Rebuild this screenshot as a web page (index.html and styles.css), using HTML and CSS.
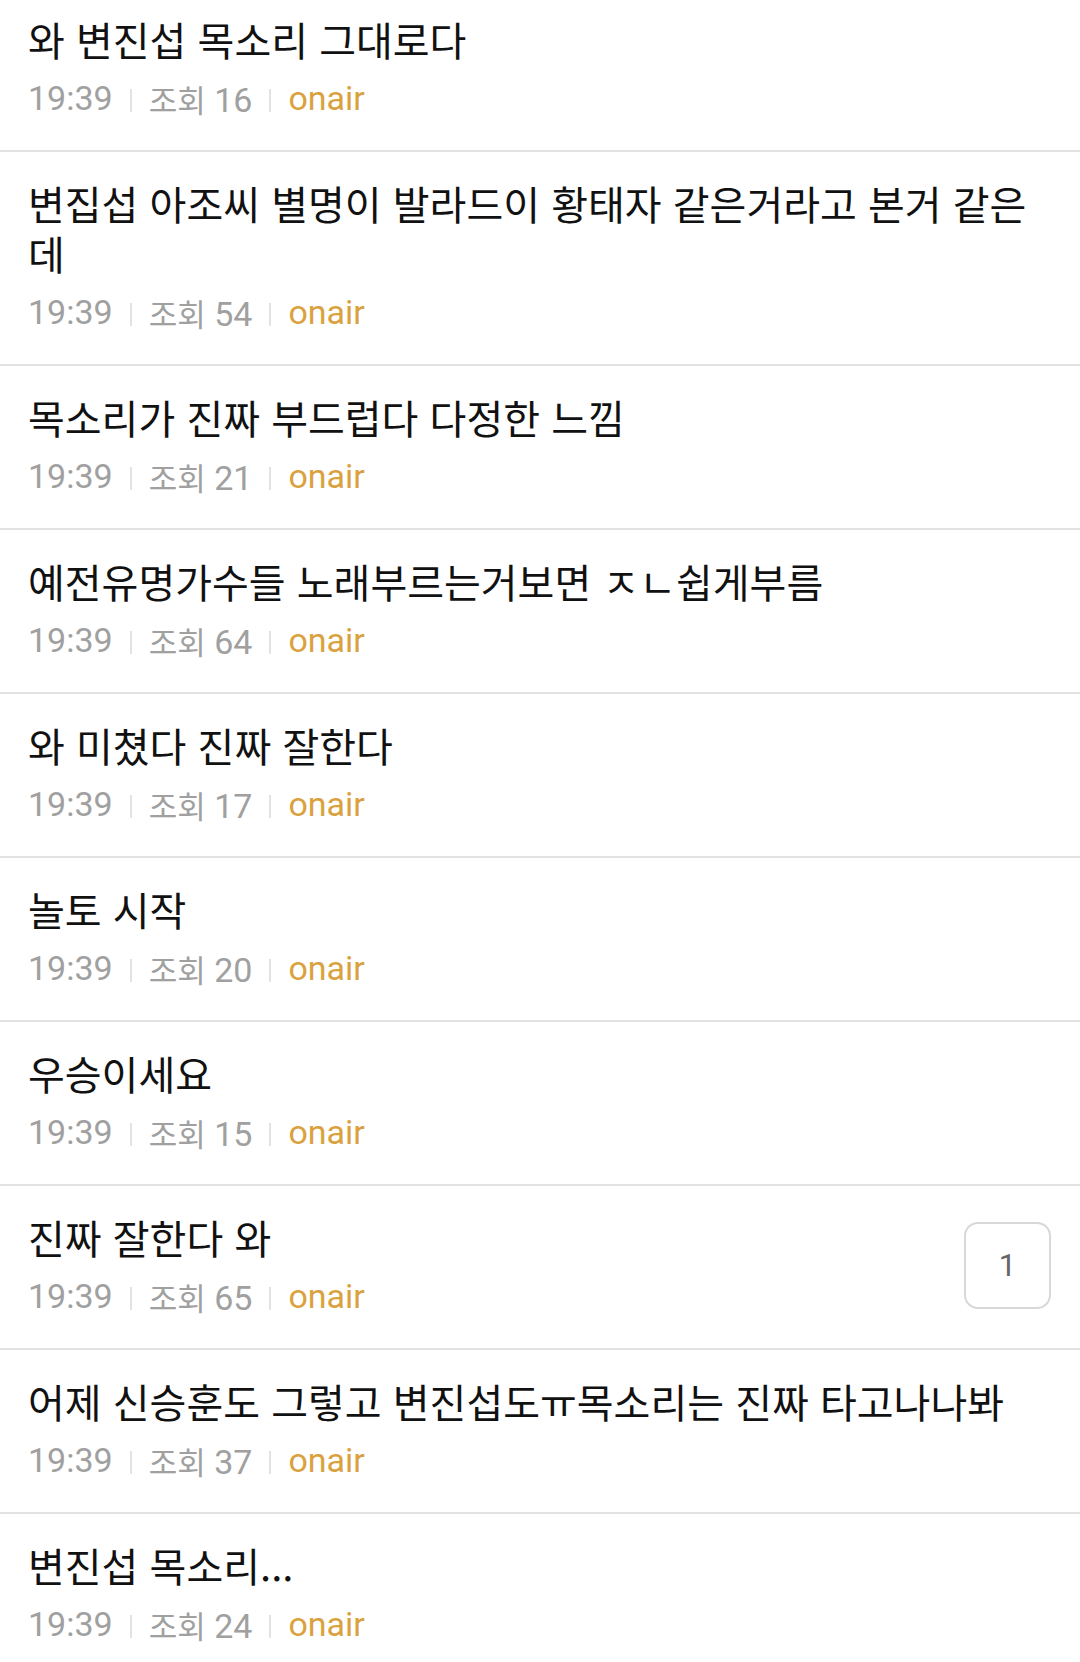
FILE: index.html
```html
<!DOCTYPE html>
<html lang="ko">
<head>
<meta charset="UTF-8">
<meta name="viewport" content="width=device-width, initial-scale=1.0">
<title>onair</title>
<link rel="stylesheet" href="styles.css">
</head>
<body>
<ul class="post-list">
  <li class="post">
    <div class="post-body">
      <div class="title">와 변진섭 목소리 그대로다</div>
      <div class="meta"><span class="time">19:39</span><span class="sep"></span><span class="views"><span class="ko">조회</span> 16</span><span class="sep"></span><span class="board">onair</span></div>
    </div>
  </li>
  <li class="post">
    <div class="post-body">
      <div class="title">변집섭 아조씨 별명이 발라드이 황태자 같은거라고 본거 같은데</div>
      <div class="meta"><span class="time">19:39</span><span class="sep"></span><span class="views"><span class="ko">조회</span> 54</span><span class="sep"></span><span class="board">onair</span></div>
    </div>
  </li>
  <li class="post">
    <div class="post-body">
      <div class="title">목소리가 진짜 부드럽다 다정한 느낌</div>
      <div class="meta"><span class="time">19:39</span><span class="sep"></span><span class="views"><span class="ko">조회</span> 21</span><span class="sep"></span><span class="board">onair</span></div>
    </div>
  </li>
  <li class="post">
    <div class="post-body">
      <div class="title">예전유명가수들 노래부르는거보면 ㅈㄴ쉽게부름</div>
      <div class="meta"><span class="time">19:39</span><span class="sep"></span><span class="views"><span class="ko">조회</span> 64</span><span class="sep"></span><span class="board">onair</span></div>
    </div>
  </li>
  <li class="post">
    <div class="post-body">
      <div class="title">와 미쳤다 진짜 잘한다</div>
      <div class="meta"><span class="time">19:39</span><span class="sep"></span><span class="views"><span class="ko">조회</span> 17</span><span class="sep"></span><span class="board">onair</span></div>
    </div>
  </li>
  <li class="post">
    <div class="post-body">
      <div class="title">놀토 시작</div>
      <div class="meta"><span class="time">19:39</span><span class="sep"></span><span class="views"><span class="ko">조회</span> 20</span><span class="sep"></span><span class="board">onair</span></div>
    </div>
  </li>
  <li class="post">
    <div class="post-body">
      <div class="title">우승이세요</div>
      <div class="meta"><span class="time">19:39</span><span class="sep"></span><span class="views"><span class="ko">조회</span> 15</span><span class="sep"></span><span class="board">onair</span></div>
    </div>
  </li>
  <li class="post">
    <div class="post-body">
      <div class="title">진짜 잘한다 와</div>
      <div class="meta"><span class="time">19:39</span><span class="sep"></span><span class="views"><span class="ko">조회</span> 65</span><span class="sep"></span><span class="board">onair</span></div>
    </div>
    <div class="comments">1</div>
  </li>
  <li class="post">
    <div class="post-body">
      <div class="title">어제 신승훈도 그렇고 변진섭도ㅠ목소리는 진짜 타고나나봐</div>
      <div class="meta"><span class="time">19:39</span><span class="sep"></span><span class="views"><span class="ko">조회</span> 37</span><span class="sep"></span><span class="board">onair</span></div>
    </div>
  </li>
  <li class="post">
    <div class="post-body">
      <div class="title">변진섭 목소리...</div>
      <div class="meta"><span class="time">19:39</span><span class="sep"></span><span class="views"><span class="ko">조회</span> 24</span><span class="sep"></span><span class="board">onair</span></div>
    </div>
  </li>
</ul>
</body>
</html>
```

FILE: styles.css
```css
body {
  margin: 0;
  padding: 0;
  background-color: #fff;
  font-family: "Noto Sans CJK KR", "Noto Sans", sans-serif;
  overflow: hidden;
}

.post-list {
  list-style: none;
  margin: -12px 0 0 0;
  padding: 0;
}

.post {
  display: flex;
  align-items: center;
  padding: 26px 29px 32px 28px;
  border-bottom: 2px solid #e2e2e2;
}

.post-body {
  flex: 1;
  min-width: 0;
}

.title {
  font-size: 40px;
  line-height: 50px;
  color: #111;
  padding-right: 10px;
}

.meta {
  display: flex;
  align-items: center;
  height: 40px;
  margin-top: 14px;
  font-family: Roboto, "Noto Sans CJK KR", sans-serif;
  font-size: 34px;
  color: #a0a0a0;
}

.meta .ko {
  font-family: "Noto Sans CJK KR", sans-serif;
  font-size: 31px;
}

.sep {
  width: 2px;
  height: 23px;
  margin: 4px 17px 0;
  background-color: #e3e3e3;
}

.board {
  color: #d9a23f;
}

.comments {
  width: 83px;
  height: 83px;
  border: 2px solid #d8d8d8;
  border-radius: 14px;
  display: flex;
  align-items: center;
  justify-content: center;
  font-family: Roboto, sans-serif;
  font-size: 31px;
  color: #666;
  margin-top: 3px;
}
```
